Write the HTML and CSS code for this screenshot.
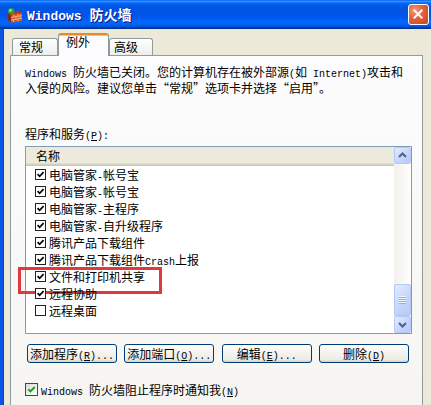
FILE: index.html
```html
<!DOCTYPE html>
<html lang="zh-CN">
<head>
<meta charset="utf-8">
<title>Windows 防火墙</title>
<link rel="stylesheet" href="styles.css">
</head>
<body>
<div class="window">
  <div class="titlebar">
    <svg class="app-icon" viewBox="0 0 16 16" width="16" height="16">
      <path d="M1 6 L12 4 L15 6 L15 14 L4 15.5 L1 13 Z" fill="#B8361A"/>
      <path d="M4 8 L15 6 L15 14 L4 15.5 Z" fill="#D9542A"/>
      <path d="M4 10.5 L15 8.6 M4 13 L15 11.3" stroke="#F6B486" stroke-width="0.9"/>
      <path d="M7 7.5 V10 M11 6.8 V9.3 M9 10 V12.6 M13 9.2 V11.8 M6.5 12.6 V15 M11 12 V14.4" stroke="#F6B486" stroke-width="0.9"/>
      <path d="M1 6 L4 8 L4 15.5 L1 13 Z" fill="#8A2410"/>
      <circle cx="4.2" cy="4.2" r="3.2" fill="#2F9D3A"/>
      <circle cx="3.4" cy="3.4" r="1.3" fill="#A8E08E"/>
    </svg>
    <span class="title"><span class="en">Windows </span>防火墙</span>
    <div class="close">
      <svg viewBox="0 0 21 21" width="19" height="19">
        <path d="M6 6 L14 14 M14 6 L6 14" stroke="#fff" stroke-width="2.2" stroke-linecap="square"/>
      </svg>
    </div>
  </div>
  <div class="client">
    <div class="tabs">
      <div class="tab tab-general">常规</div>
      <div class="tab tab-exceptions active">例外</div>
      <div class="tab tab-advanced">高级</div>
    </div>
    <div class="panel">
      <p class="info"><span class="en">Windows </span>防火墙已关闭。您的计算机存在被外部源<span class="en">(</span>如<span class="en"> Internet)</span>攻击和<br>入侵的风险。建议您单击“常规”选项卡并选择“启用”。</p>
      <div class="label">程序和服务<span class="en">(<u>P</u>):</span></div>
      <div class="listbox">
        <div class="list-main">
          <div class="list-header">名称</div>
          <ul class="rows">
            <li><span class="cb"><svg viewBox="0 0 9 9"><path d="M1.6 4.2 L3.6 6.3 L7.6 2.2" stroke="#000" stroke-width="1.7" fill="none"/></svg></span><span class="name">电脑管家<span class="en">-</span>帐号宝</span></li>
            <li><span class="cb"><svg viewBox="0 0 9 9"><path d="M1.6 4.2 L3.6 6.3 L7.6 2.2" stroke="#000" stroke-width="1.7" fill="none"/></svg></span><span class="name">电脑管家<span class="en">-</span>帐号宝</span></li>
            <li><span class="cb"><svg viewBox="0 0 9 9"><path d="M1.6 4.2 L3.6 6.3 L7.6 2.2" stroke="#000" stroke-width="1.7" fill="none"/></svg></span><span class="name">电脑管家<span class="en">-</span>主程序</span></li>
            <li><span class="cb"><svg viewBox="0 0 9 9"><path d="M1.6 4.2 L3.6 6.3 L7.6 2.2" stroke="#000" stroke-width="1.7" fill="none"/></svg></span><span class="name">电脑管家<span class="en">-</span>自升级程序</span></li>
            <li><span class="cb"><svg viewBox="0 0 9 9"><path d="M1.6 4.2 L3.6 6.3 L7.6 2.2" stroke="#000" stroke-width="1.7" fill="none"/></svg></span><span class="name">腾讯产品下载组件</span></li>
            <li><span class="cb"><svg viewBox="0 0 9 9"><path d="M1.6 4.2 L3.6 6.3 L7.6 2.2" stroke="#000" stroke-width="1.7" fill="none"/></svg></span><span class="name">腾讯产品下载组件<span class="en">Crash</span>上报</span></li>
            <li class="marked"><span class="cb"><svg viewBox="0 0 9 9"><path d="M1.6 4.2 L3.6 6.3 L7.6 2.2" stroke="#000" stroke-width="1.7" fill="none"/></svg></span><span class="name">文件和打印机共享</span></li>
            <li><span class="cb"><svg viewBox="0 0 9 9"><path d="M1.6 4.2 L3.6 6.3 L7.6 2.2" stroke="#000" stroke-width="1.7" fill="none"/></svg></span><span class="name">远程协助</span></li>
            <li><span class="cb"></span><span class="name">远程桌面</span></li>
          </ul>
        </div>
        <div class="scrollbar">
          <div class="sb-btn">
            <svg viewBox="0 0 15 15" width="15" height="15"><path d="M4 9 L7.5 5.5 L11 9" stroke="#4D6185" stroke-width="2" fill="none"/></svg>
          </div>
          <div class="sb-track"></div>
          <div class="sb-thumb"><span class="grip"></span></div>
          <div class="sb-btn">
            <svg viewBox="0 0 15 15" width="15" height="15"><path d="M4 6 L7.5 9.5 L11 6" stroke="#4D6185" stroke-width="2" fill="none"/></svg>
          </div>
        </div>
      </div>
      <div class="buttons">
        <button class="btn">添加程序<span class="en">(<u>R</u>)...</span></button>
        <button class="btn">添加端口<span class="en">(<u>O</u>)...</span></button>
        <button class="btn">编辑<span class="en">(<u>E</u>)...</span></button>
        <button class="btn">删除<span class="en">(<u>D</u>)</span></button>
      </div>
      <label class="notify">
        <span class="xpcb"><svg viewBox="0 0 11 11" width="11" height="11"><path d="M2.3 5.2 L4.4 7.4 L8.8 3" stroke="#21A121" stroke-width="2" fill="none"/></svg></span>
        <span class="name"><span class="en">Windows </span>防火墙阻止程序时通知我<span class="en">(<u>N</u>)</span></span>
      </label>
    </div>
  </div>
</div>
</body>
</html>
```
FILE: styles.css
```css
* { box-sizing: border-box; }
html, body { margin: 0; padding: 0; }
body {
  width: 431px;
  height: 405px;
  overflow: hidden;
  background: #ECE9D8;
  font-family: "Noto Sans CJK SC", sans-serif;
  font-size: 12px;
  line-height: 15px;
  color: #000;
}
.en {
  font-family: "Liberation Mono", "DejaVu Sans Mono", monospace;
  font-size: 10px;
  line-height: 1;
}
u { text-decoration: underline; text-underline-offset: 1px; }

.window {
  width: 431px;
  height: 405px;
  display: flex;
  flex-direction: column;
  overflow: hidden;
}

/* title bar */
.titlebar {
  flex: none;
  height: 29px;
  display: flex;
  align-items: center;
  padding-left: 7px;
  background: linear-gradient(to bottom,
    #0058EE 0%, #3593FF 4%, #288EFF 6%, #127DFF 8%, #036FFC 10%,
    #0262EE 14%, #0057E5 20%, #0054E3 24%, #0055EB 56%, #005BF5 66%,
    #026AFE 76%, #0062EF 86%, #0052D6 92%, #0040AB 94%, #003092 100%);
}
.app-icon { flex: none; margin-right: 4px; margin-top: 1px; }
.title {
  color: #fff;
  font-weight: bold;
  font-size: 14px;
  line-height: 16px;
  text-shadow: 1px 1px 0 #0A1883;
  white-space: nowrap;
}
.title .en { font-size: 13px; font-weight: bold; }
.close {
  margin-left: auto;
  margin-right: 2px;
  width: 21px;
  height: 21px;
  border: 1px solid #fff;
  border-radius: 3px;
  display: flex;
  align-items: center;
  justify-content: center;
  background: radial-gradient(circle at 30% 30%, #F39A76 0%, #E2603A 45%, #C9421C 100%);
}

/* client area */
.client {
  flex: 1;
  border-left: 3px solid #0B54E4;
  box-shadow: inset 1px 0 0 #0A3FC6;
  padding: 5px 0 0 7px;
}

/* tabs */
.tabs {
  position: relative;
  z-index: 1;
  display: flex;
  align-items: flex-end;
  height: 21px;
  padding-left: 2px;
}
.tab {
  height: 17px;
  border: 1px solid #919B9C;
  border-bottom: none;
  border-radius: 3px 3px 0 0;
  background: linear-gradient(#FFFFFF, #FAFAF9 26%, #F0F0EA 95%, #ECEBE5);
  line-height: 16px;
  padding-left: 6px;
  white-space: nowrap;
}
.tab-general { width: 46px; }
.tab-exceptions { width: 51px; }
.tab-advanced { width: 44px; padding-left: 4px; }
.tab.active {
  height: 23px;
  margin-bottom: -1px;
  padding-left: 7px;
  border-top: 2px solid #E68B2C;
  box-shadow: inset 0 1px 0 #FFC73C;
  background: #FCFCFE;
  line-height: 14px;
}

/* panel */
.panel {
  width: 413px;
  height: 360px;
  border: 1px solid #919B9C;
  background: linear-gradient(#FCFCFE, #F6F5F1);
  padding: 8px 0 0 14px;
}
.info { margin: 0; line-height: 15px; white-space: nowrap; }
.label { margin-top: 31px; height: 15px; line-height: 15px; }

.listbox {
  margin-top: 5px;
  width: 387px;
  height: 188px;
  border: 1px solid #7F9DB9;
  background: #fff;
  display: flex;
}
.list-main { flex: 1; }
.list-header {
  height: 19px;
  line-height: 18px;
  padding-left: 10px;
  background: #EBEADB;
  box-shadow: inset 0 -1px 0 #CBC7B8, inset 0 -2px 0 #D6D2C2, inset 0 -3px 0 #E2DECD;
}
.rows { list-style: none; margin: 0; padding: 0; }
.rows li {
  position: relative;
  height: 17px;
  display: flex;
  align-items: center;
  padding-left: 9px;
  white-space: nowrap;
}
.name { line-height: 15px; }
.cb {
  flex: none;
  width: 11px;
  height: 11px;
  border: 1px solid #222;
  background: #fff;
  margin-right: 3px;
  display: flex;
}
.cb svg { width: 9px; height: 9px; }
.rows li.marked::after {
  content: "";
  position: absolute;
  left: -8px;
  top: -1px;
  width: 138px;
  height: 21px;
  border: 3px solid #E0393B;
}

/* scrollbar */
.scrollbar {
  flex: none;
  width: 17px;
  display: flex;
  flex-direction: column;
  background: linear-gradient(to right, #F3F1EC, #FEFEFB);
}
.sb-btn, .sb-thumb {
  height: 17px;
  border: 1px solid #B4C8F6;
  border-radius: 2px;
  background: linear-gradient(135deg, #E3ECFE, #C6D6FC 55%, #B5C9F8);
  display: flex;
  align-items: center;
  justify-content: center;
}
.sb-track { flex: 1; }
.sb-thumb { height: 32px; }
.grip {
  width: 7px;
  height: 8px;
  background: repeating-linear-gradient(to bottom, #EEF4FE 0 1px, #8CB0F8 1px 2px);
}

/* buttons */
.buttons {
  margin: 10px 0 0 2px;
  width: 382px;
  display: flex;
  justify-content: space-between;
}
.btn {
  width: 90px;
  height: 19px;
  padding: 0;
  border: 1px solid #003C74;
  border-radius: 3px;
  background: linear-gradient(#FFFFFF, #F5F4EF 40%, #ECEBE6 86%, #D6D0C5);
  font-family: "Noto Sans CJK SC", sans-serif;
  font-size: 12px;
  line-height: 16px;
  color: #000;
  white-space: nowrap;
}

/* notify checkbox */
.notify {
  margin-top: 19px;
  height: 15px;
  display: flex;
  align-items: center;
  white-space: nowrap;
}
.xpcb {
  flex: none;
  width: 13px;
  height: 13px;
  border: 1px solid #1C5180;
  background: linear-gradient(135deg, #DCDCD7, #FFFFFF);
  margin-right: 3px;
  display: flex;
}
```
